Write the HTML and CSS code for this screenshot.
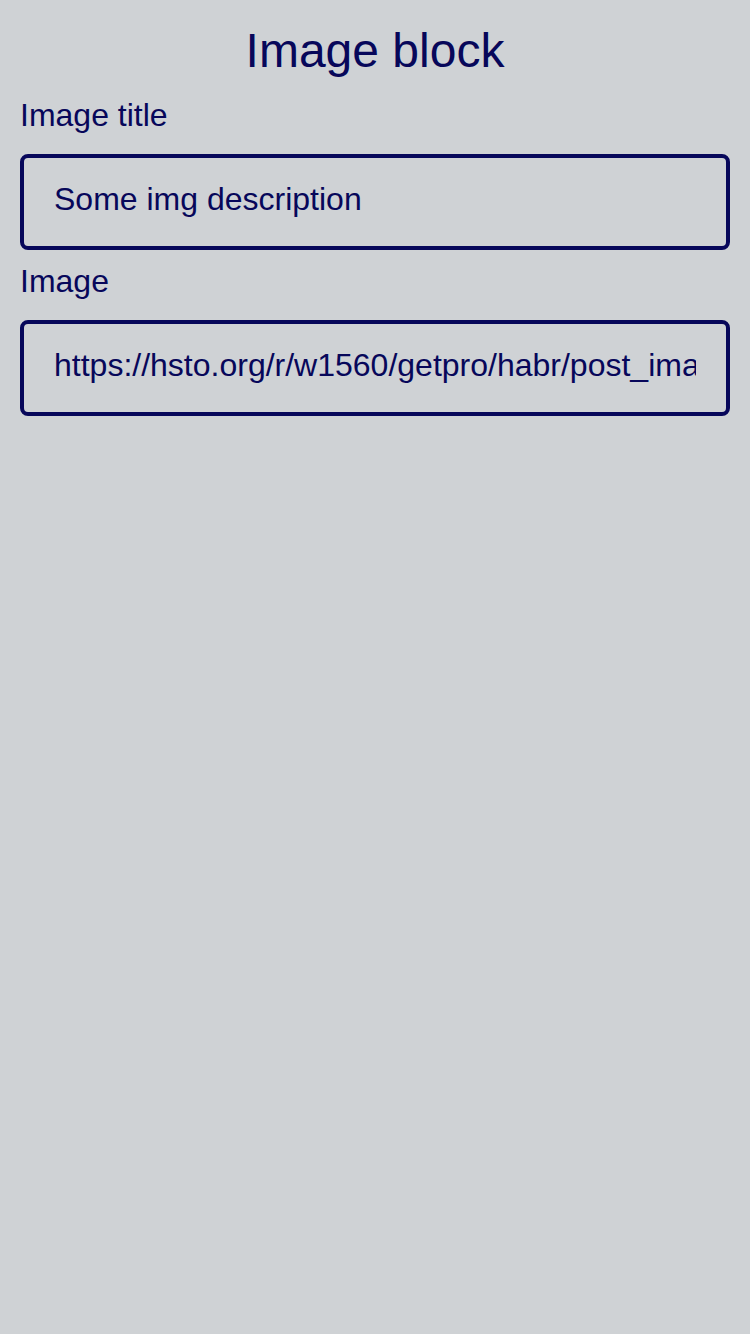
FILE: index.html
```html
<!DOCTYPE html>
<html lang="en">
<head>
<meta charset="utf-8">
<title>Image block</title>
<link rel="stylesheet" href="styles.css">
</head>
<body>
<main class="page">
  <h1 class="title">Image block</h1>
  <label class="label" for="img-title">Image title</label>
  <input class="field" id="img-title" type="text" value="Some img description">
  <label class="label" for="img-url">Image</label>
  <input class="field" id="img-url" type="text" value="https://hsto.org/r/w1560/getpro/habr/post_images/1a2/b3c/d4e/1a2b3c4d5e6f.png">
</main>
</body>
</html>
```

FILE: styles.css
```css
html, body {
  margin: 0;
  padding: 0;
  background: #cfd2d5;
  min-height: 100%;
}
body {
  font-family: "Liberation Sans", Arial, sans-serif;
  color: #07075a;
}
.page {
  display: flex;
  flex-direction: column;
  padding: 23px 20px 0;
}
.title {
  margin: 0 0 19px;
  font-size: 48px;
  font-weight: normal;
  line-height: normal;
  text-align: center;
}
.label {
  font-size: 32px;
  line-height: normal;
  margin-bottom: 20px;
}
.field {
  box-sizing: border-box;
  width: 100%;
  height: 96px;
  margin: 0 0 13px;
  padding: 0 30px 5px;
  border: 4px solid #07075a;
  border-radius: 8px;
  background: transparent;
  font-family: "Liberation Sans", Arial, sans-serif;
  font-size: 32px;
  color: #07075a;
  outline: none;
}
```
